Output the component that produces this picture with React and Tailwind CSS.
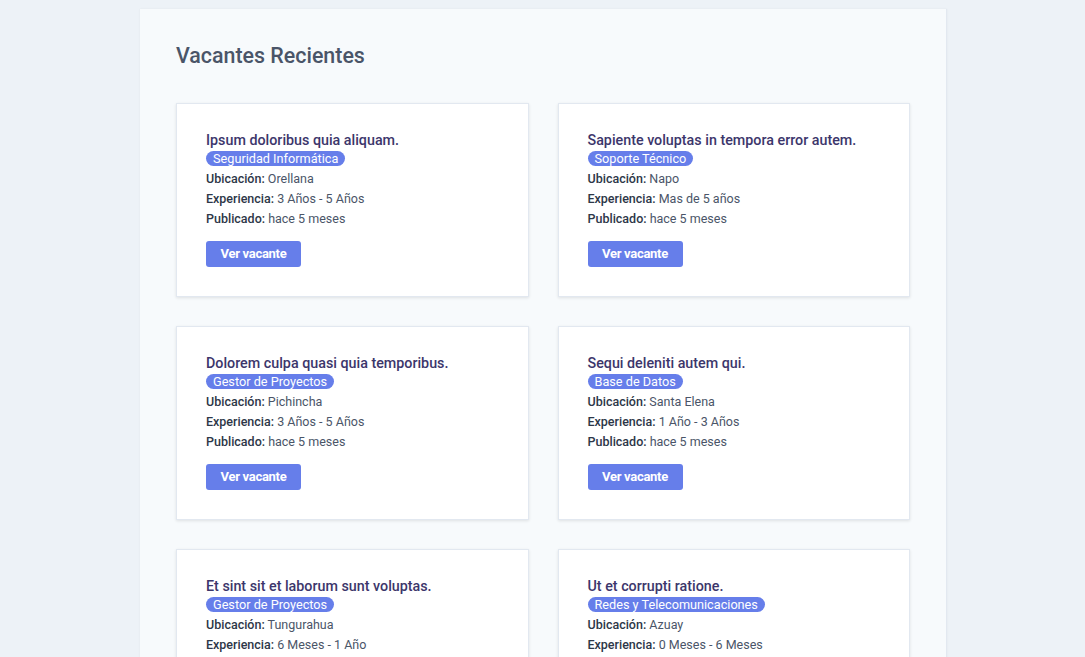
import React from "react";

const jobs = [
  { title: "Ipsum doloribus quia aliquam.", cat: "Seguridad Informática", loc: "Orellana", exp: "3 Años - 5 Años", pub: "hace 5 meses" },
  { title: "Sapiente voluptas in tempora error autem.", cat: "Soporte Técnico", loc: "Napo", exp: "Mas de 5 años", pub: "hace 5 meses" },
  { title: "Dolorem culpa quasi quia temporibus.", cat: "Gestor de Proyectos", loc: "Pichincha", exp: "3 Años - 5 Años", pub: "hace 5 meses" },
  { title: "Sequi deleniti autem qui.", cat: "Base de Datos", loc: "Santa Elena", exp: "1 Año - 3 Años", pub: "hace 5 meses" },
  { title: "Et sint sit et laborum sunt voluptas.", cat: "Gestor de Proyectos", loc: "Tungurahua", exp: "6 Meses - 1 Año", pub: "hace 5 meses" },
  { title: "Ut et corrupti ratione.", cat: "Redes y Telecomunicaciones", loc: "Azuay", exp: "0 Meses - 6 Meses", pub: "hace 5 meses" },
];

function Card({ job }) {
  return (
    <div className="flex flex-col items-start bg-white border border-[#e2e8f0] shadow-[0_1px_3px_rgba(0,0,0,0.1)] px-[29px] pt-[26px] pb-[29px]">
      <h3 className="text-[14.3px] leading-[20px] font-medium text-[#3c366b]">{job.title}</h3>
      <span className="inline-block bg-[#667eea] text-white text-[12.7px] leading-[15px] rounded-full px-[7px] mt-[1px]">{job.cat}</span>
      <div className="mt-[3px] text-[12.5px] leading-[20px] text-[#4a5568]">
        <p><span className="font-medium text-[#2d3748]">Ubicación:</span> {job.loc}</p>
        <p><span className="font-medium text-[#2d3748]">Experiencia:</span> {job.exp}</p>
        <p><span className="font-medium text-[#2d3748]">Publicado:</span> {job.pub}</p>
      </div>
      <button className="mt-[12px] h-[26px] w-[95px] bg-[#667eea] text-white text-[13px] font-bold rounded-[3px] tracking-[-0.3px]">Ver vacante</button>
    </div>
  );
}

export default function App() {
  return (
    <div className="min-h-screen bg-[#edf2f7] pt-[9px]" style={{ fontFamily: "Roboto, 'Liberation Sans', sans-serif" }}>
      <div className="ml-[140px] w-[807px] bg-[#f7fafc] border-r border-[#e2e8f0] shadow-[0_0_2px_rgba(0,0,0,0.06)] px-[36px] pt-[33px] pb-[40px]">
        <h2 className="text-[21.4px] leading-[28px] font-medium text-[#4a5568]">Vacantes Recientes</h2>
        <div className="mt-[33px] grid grid-cols-2 gap-x-[29px] gap-y-[29px]">
          {jobs.map((j, i) => (
            <Card key={i} job={j} />
          ))}
        </div>
      </div>
    </div>
  );
}
